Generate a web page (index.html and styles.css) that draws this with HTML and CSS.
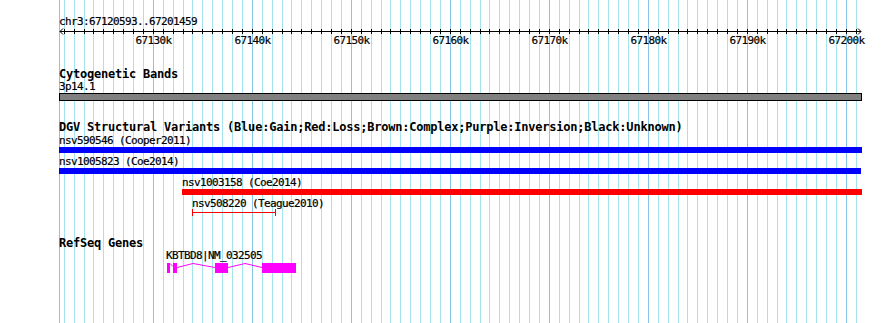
FILE: index.html
```html
<!DOCTYPE html>
<html lang="en">
<head>
    <meta charset="UTF-8">
    <meta name="viewport" content="width=device-width, initial-scale=1.0">
    <title>chr3:67120593..67201459</title>
    <link rel="stylesheet" href="styles.css">
</head>
<body>
    <div class="panel">
        <svg class="grid" id="grid" width="890" height="323"></svg>
        <div class="tracks">
            <div class="ruler">
                <div class="chrom-label">chr3:67120593..67201459</div>
                <svg class="axis" id="axis" width="803" height="7">
                    <rect x="1" y="3" width="801" height="1" fill="#000"/>
                    <path d="M4,0.5 L1,3.5 L4,6.5" fill="none" stroke="#000"/>
                    <path d="M799,0.5 L802,3.5 L799,6.5" fill="none" stroke="#000"/>
                </svg>
                <div class="tick-labels" id="tickLabels"></div>
            </div>

            <section class="track cyto">
                <h2 class="track-title">Cytogenetic Bands</h2>
                <div class="band-label">3p14.1</div>
                <div class="band-bar"></div>
            </section>

            <section class="track dgv">
                <h2 class="track-title">DGV Structural Variants (Blue:Gain;Red:Loss;Brown:Complex;Purple:Inversion;Black:Unknown)</h2>
                <div class="feature" style="margin-left: 0px; width: 803px;">
                    <div class="feature-label">nsv590546 (Cooper2011)</div>
                    <div class="feature-bar gain"></div>
                </div>
                <div class="feature" style="margin-left: 0px; width: 802px;">
                    <div class="feature-label">nsv1005823 (Coe2014)</div>
                    <div class="feature-bar gain"></div>
                </div>
                <div class="feature" style="margin-left: 123px; width: 680px;">
                    <div class="feature-label">nsv1003158 (Coe2014)</div>
                    <div class="feature-bar loss"></div>
                </div>
                <div class="feature" style="margin-left: 133px; width: 84px;">
                    <div class="feature-label">nsv508220 (Teague2010)</div>
                    <div class="feature-span"></div>
                </div>
            </section>

            <section class="track genes">
                <h2 class="track-title">RefSeq Genes</h2>
                <div class="gene" style="margin-left: 107px;">
                    <div class="gene-label">KBTBD8|NM_032505</div>
                    <svg class="gene-model" width="131" height="12">
                        <rect x="1" y="1" width="3" height="10" fill="#f0f"/>
                        <path d="M4,1.5 L7,4.5" fill="none" stroke="#f0f"/>
                        <rect x="7" y="1" width="4" height="10" fill="#f0f"/>
                        <polyline points="11,5.5 27,1.5 49,5.5" fill="none" stroke="#f0f"/>
                        <rect x="49" y="1" width="13" height="10" fill="#f0f"/>
                        <polyline points="62,5.5 79,1.5 96,5.5" fill="none" stroke="#f0f"/>
                        <rect x="96" y="1" width="34" height="10" fill="#f0f"/>
                    </svg>
                </div>
            </section>
        </div>
    </div>

    <script>
        const svgNS = 'http://www.w3.org/2000/svg';
        const grid = document.getElementById('grid');
        const axis = document.getElementById('axis');
        const tickLabels = document.getElementById('tickLabels');
        const trackLeft = 59;

        // pixel column of a position given in kb
        function xOf(kb) {
            return Math.floor(153.3 + (kb - 67130) * 9.9);
        }

        function addRect(svg, x, y, w, h, color) {
            const r = document.createElementNS(svgNS, 'rect');
            r.setAttribute('x', x);
            r.setAttribute('y', y);
            r.setAttribute('width', w);
            r.setAttribute('height', h);
            r.setAttribute('fill', color);
            svg.appendChild(r);
        }

        addRect(grid, trackLeft, 0, 1, 323, '#86c4ec');

        for (let kb = 67121; kb <= 67201; kb++) {
            const x = xOf(kb);
            const major = kb % 10 === 0;
            addRect(grid, x, 0, 1, 323, major ? '#86c4ec' : '#a4e4ee');
            addRect(axis, x - trackLeft, 1, 1, 5, '#000');
            if (major) {
                const label = document.createElement('div');
                label.className = 'tick-label';
                label.style.left = (x - trackLeft + 0.5) + 'px';
                label.textContent = kb + 'k';
                tickLabels.appendChild(label);
            }
        }
    </script>
</body>
</html>
```

FILE: styles.css
```css
body {
    margin: 0;
    background-color: #fff;
    color: #000;
    font-family: "DejaVu Sans Mono", "Liberation Mono", monospace;
    font-size: 11px;
    letter-spacing: -0.62px;
    line-height: 13px;
    -webkit-text-stroke: 0.2px #000;
}
.panel {
    position: relative;
    width: 890px;
    height: 323px;
    overflow: hidden;
}
.grid {
    position: absolute;
    left: 0;
    top: 0;
}
.tracks {
    position: relative;
    padding-left: 59px;
}
.ruler {
    padding-top: 15px;
    margin-bottom: 20px;
}
.chrom-label,
.band-label,
.feature-label,
.gene-label {
    white-space: nowrap;
}
.axis {
    display: block;
}
.tick-labels {
    position: relative;
    width: 803px;
    height: 13px;
    margin-top: -1px;
}
.tick-label {
    position: absolute;
    top: 0;
    transform: translateX(-50%);
    white-space: nowrap;
}
.track-title {
    margin: 0;
    padding-top: 2px;
    font-size: 12px;
    font-weight: bold;
    letter-spacing: -0.22px;
    line-height: 11px;
    white-space: nowrap;
    -webkit-text-stroke: 0;
}
.cyto {
    margin-bottom: 19px;
}
.band-label {
    margin-top: 1px;
    line-height: 11px;
}
.band-bar {
    margin-top: 1px;
    width: 801px;
    height: 6px;
    background-color: #808080;
    border: 1px solid #000;
}
.dgv {
    margin-bottom: 20px;
}
.dgv .track-title {
    margin-bottom: 1px;
}
.feature-bar {
    height: 6px;
    margin-bottom: 2px;
}
.gain {
    background-color: #0000ff;
}
.loss {
    background-color: #ff0000;
}
.feature-span {
    box-sizing: border-box;
    height: 7px;
    margin-top: -1px;
    border-left: 1px solid #ff0000;
    border-right: 1px solid #ff0000;
    background: linear-gradient(#ff0000, #ff0000) 0 3px / 100% 1px no-repeat;
}
.gene-model {
    display: block;
}
```
